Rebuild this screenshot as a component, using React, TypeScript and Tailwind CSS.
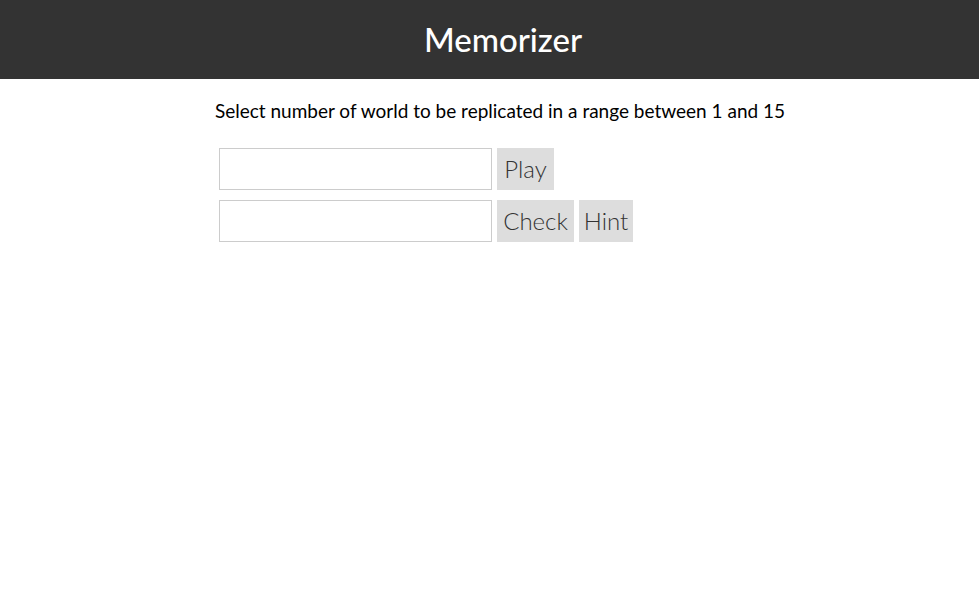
import React from "react";

export default function App() {
  return (
    <div className="min-h-screen bg-white" style={{ fontFamily: "Lato, 'Noto Sans', sans-serif" }}>
      <header className="h-[79px] bg-[#333333] flex items-center justify-center pl-[27px]">
        <h1 className="text-[33px] text-white font-medium">Memorizer</h1>
      </header>
      <p className="mt-[21px] text-center pl-[21px] text-[19px] text-black leading-[22px]">
        Select number of world to be replicated in a range between 1 and 15
      </p>
      <div className="mt-[26px] ml-[219px] flex flex-col gap-[10px]">
        <div className="flex gap-[5px]">
          <input className="w-[273px] h-[42px] border border-[#cccccc] outline-none" />
          <button className="h-[42px] w-[57px] bg-[#dddddd] text-[24px] font-light text-[#333]">Play</button>
        </div>
        <div className="flex gap-[5px]">
          <input className="w-[273px] h-[42px] border border-[#cccccc] outline-none" />
          <button className="h-[42px] w-[77px] bg-[#dddddd] text-[24px] font-light text-[#333]">Check</button>
          <button className="h-[42px] w-[54px] bg-[#dddddd] text-[24px] font-light text-[#333]">Hint</button>
        </div>
      </div>
    </div>
  );
}
